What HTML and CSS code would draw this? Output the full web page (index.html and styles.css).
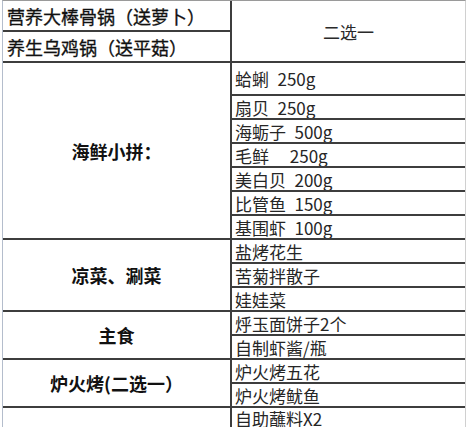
FILE: index.html
```html
<!DOCTYPE html>
<html lang="zh-CN">
<head>
<meta charset="utf-8">
<title>锅底套餐</title>
<link rel="stylesheet" href="styles.css">
</head>
<body>
<div class="sheet">
  <div class="cell head">营养大棒骨锅（送萝卜）</div>
  <div class="cell choice">二选一</div>
  <div class="cell head">养生乌鸡锅（送平菇）</div>

  <div class="cell label span7">海鲜小拼：</div>
  <div class="cell item">蛤蜊&ensp;250g</div>
  <div class="cell item">扇贝&ensp;250g</div>
  <div class="cell item">海蛎子&ensp;500g</div>
  <div class="cell item">毛鲜&ensp;&ensp; 250g</div>
  <div class="cell item">美白贝&ensp;200g</div>
  <div class="cell item">比管鱼&ensp;150g</div>
  <div class="cell item">基围虾&ensp;100g</div>

  <div class="cell label span3">凉菜、涮菜</div>
  <div class="cell item">盐烤花生</div>
  <div class="cell item">苦菊拌散子</div>
  <div class="cell item">娃娃菜</div>

  <div class="cell label span2">主食</div>
  <div class="cell item">烀玉面饼子2个</div>
  <div class="cell item">自制虾酱/瓶</div>

  <div class="cell label span2">炉火烤(二选一）</div>
  <div class="cell item">炉火烤五花</div>
  <div class="cell item">炉火烤鱿鱼</div>

  <div class="cell label"></div>
  <div class="cell item last">自助蘸料X2</div>
</div>
</body>
</html>
```

FILE: styles.css
```css
html, body {
  margin: 0;
  padding: 0;
  overflow: hidden;
  background: #ffffff;
}

body {
  width: 466px;
  height: 427px;
  font-family: "Noto Sans CJK SC", "Liberation Sans", sans-serif;
}

.sheet {
  margin-left: 2px;
  width: 462px;
  border-left: 1px solid #b4bdcc;
  border-right: 1px solid #d0d0d0;
  border-top: 1px solid #9a9a9a;
  background: #3d3d3d;
  display: grid;
  grid-template-columns: 227px 233px;
  grid-template-rows: 29px 29px 31px repeat(13, 22px) 19px;
  gap: 2px;
}

.cell {
  background: #ffffff;
  display: flex;
  align-items: center;
  overflow: hidden;
  white-space: nowrap;
}

.head {
  grid-column: 1;
  padding-left: 4px;
  font-size: 18px;
  font-weight: 400;
  color: #111111;
  -webkit-text-stroke: 0.3px #111111;
}

.choice {
  grid-column: 2;
  grid-row: span 2;
  justify-content: center;
  font-size: 17px;
  color: #2a2a2a;
}

.label {
  grid-column: 1;
  justify-content: center;
  font-size: 18px;
  font-weight: 700;
  color: #111111;
}

.span7 { grid-row: span 7; }
.span3 { grid-row: span 3; }
.span2 { grid-row: span 2; }

.item {
  grid-column: 2;
  padding-left: 3px;
  font-size: 17px;
  color: #262626;
}

.last {
  line-height: 1;
  align-items: flex-end;
}
```
